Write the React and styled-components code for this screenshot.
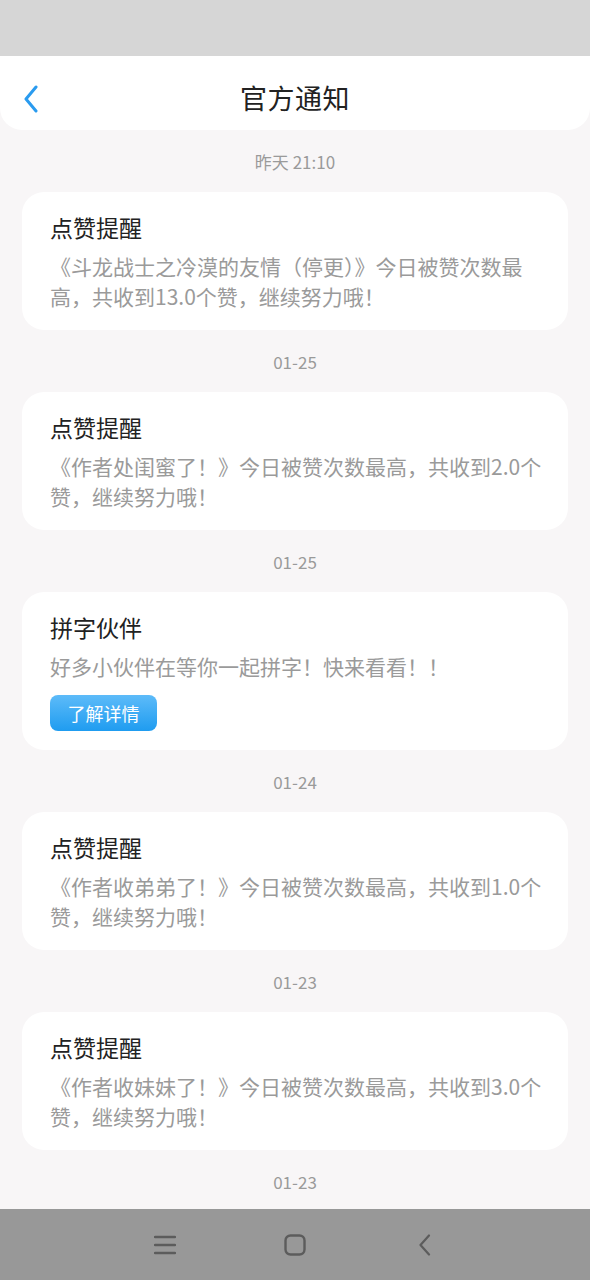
import styled, { createGlobalStyle } from "styled-components";

const GlobalStyle = createGlobalStyle`
  html, body {
    margin: 0;
    padding: 0;
    background: #f8f6f7;
    font-family: "Noto Sans CJK SC", "Noto Sans", sans-serif;
  }
  * {
    box-sizing: border-box;
  }
`;

const Screen = styled.div`
  height: 1280px;
  display: flex;
  flex-direction: column;
  background: #f8f6f7;
  overflow: hidden;
`;

const StatusBar = styled.div`
  height: 56px;
  flex-shrink: 0;
  background: #d6d6d6;
`;

const Header = styled.div`
  height: 74px;
  flex-shrink: 0;
  padding-top: 9px;
  display: flex;
  align-items: center;
  justify-content: center;
  position: relative;
  background: #ffffff;
  border-radius: 0 0 22px 22px;
`;

const BackButton = styled.div`
  position: absolute;
  left: 20px;
  top: 28px;
  width: 22px;
  height: 30px;
  display: flex;
  align-items: center;
  justify-content: center;
`;

const Title = styled.h1`
  margin: 0;
  font-size: 27px;
  font-weight: 400;
  color: #222222;
  letter-spacing: 0.5px;
`;

const Feed = styled.div`
  flex: 1;
  overflow: hidden;
  display: flex;
  flex-direction: column;
`;

const DateRow = styled.div`
  height: 62px;
  flex-shrink: 0;
  display: flex;
  align-items: center;
  justify-content: center;
  font-size: 17px;
  color: #9a9a9a;
`;

const Card = styled.div`
  flex-shrink: 0;
  margin: 0 22px;
  padding: 19px 26px 19px 28px;
  background: #ffffff;
  border-radius: 22px;
`;

const CardTitle = styled.div`
  font-size: 23px;
  line-height: 32px;
  color: #222222;
`;

const CardBody = styled.div`
  margin-top: 8px;
  font-size: 21px;
  line-height: 30px;
  color: #9a9a9a;
  word-break: break-all;
`;

const DetailButton = styled.div`
  margin-top: 14px;
  width: 107px;
  height: 36px;
  display: flex;
  align-items: center;
  justify-content: center;
  border-radius: 8px;
  background: linear-gradient(180deg, #5dbbf9 0%, #1f9cf0 100%);
  color: #ffffff;
  font-size: 18px;
`;

const NavBar = styled.div`
  height: 71px;
  flex-shrink: 0;
  display: flex;
  align-items: center;
  justify-content: center;
  gap: 100px;
  background: #989898;
`;

const NavIcon = styled.div`
  width: 30px;
  height: 30px;
  display: flex;
  align-items: center;
  justify-content: center;
`;

const notices = [
  {
    date: "昨天 21:10",
    title: "点赞提醒",
    body: "《斗龙战士之冷漠的友情（停更）》今日被赞次数最高，共收到13.0个赞，继续努力哦！",
  },
  {
    date: "01-25",
    title: "点赞提醒",
    body: "《作者处闺蜜了！》今日被赞次数最高，共收到2.0个赞，继续努力哦！",
  },
  {
    date: "01-25",
    title: "拼字伙伴",
    body: "好多小伙伴在等你一起拼字！快来看看！！",
    action: "了解详情",
  },
  {
    date: "01-24",
    title: "点赞提醒",
    body: "《作者收弟弟了！》今日被赞次数最高，共收到1.0个赞，继续努力哦！",
  },
  {
    date: "01-23",
    title: "点赞提醒",
    body: "《作者收妹妹了！》今日被赞次数最高，共收到3.0个赞，继续努力哦！",
  },
];

const App = () => {
  return (
    <Screen>
      <GlobalStyle />
      <StatusBar />
      <Header>
        <BackButton>
          <svg width="16" height="28" viewBox="0 0 16 28" fill="none">
            <path
              d="M13 2 L3 14 L13 26"
              stroke="#2a9bef"
              strokeWidth="3"
              strokeLinecap="round"
              strokeLinejoin="round"
            />
          </svg>
        </BackButton>
        <Title>官方通知</Title>
      </Header>
      <Feed>
        {notices.map((n, i) => (
          <div key={i}>
            <DateRow>{n.date}</DateRow>
            <Card>
              <CardTitle>{n.title}</CardTitle>
              <CardBody>{n.body}</CardBody>
              {n.action && <DetailButton>{n.action}</DetailButton>}
            </Card>
          </div>
        ))}
        <DateRow>01-23</DateRow>
      </Feed>
      <NavBar>
        <NavIcon>
          <svg width="22" height="20" viewBox="0 0 22 20">
            <path d="M1 2 H21 M1 10 H21 M1 18 H21" stroke="#5c5c5c" strokeWidth="2.4" strokeLinecap="round" />
          </svg>
        </NavIcon>
        <NavIcon>
          <svg width="22" height="22" viewBox="0 0 22 22" fill="none">
            <rect x="1.5" y="1.5" width="19" height="19" rx="5" stroke="#5c5c5c" strokeWidth="2.4" />
          </svg>
        </NavIcon>
        <NavIcon>
          <svg width="14" height="22" viewBox="0 0 14 22" fill="none">
            <path d="M11 1.5 L2.5 11 L11 20.5" stroke="#5c5c5c" strokeWidth="2.2" strokeLinecap="round" strokeLinejoin="round" />
          </svg>
        </NavIcon>
      </NavBar>
    </Screen>
  );
};

export default App;
